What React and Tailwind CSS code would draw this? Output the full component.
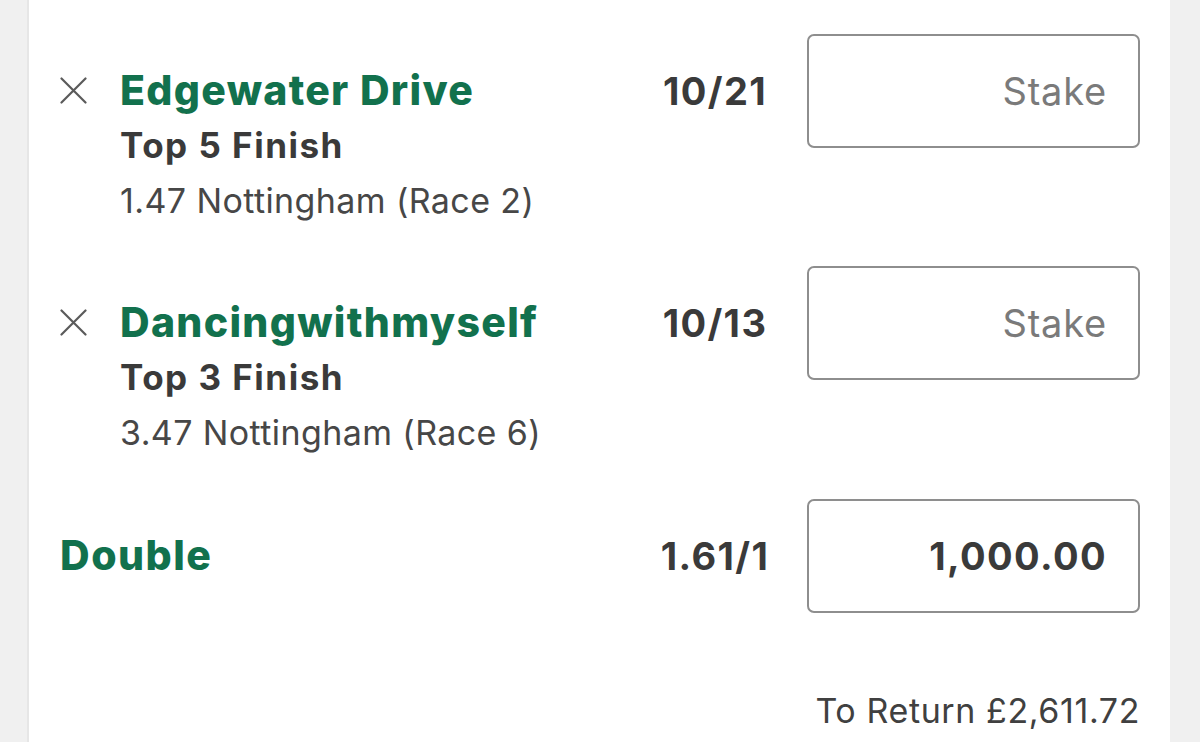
import React from 'react';

const selections = [
  { name: 'Edgewater Drive', market: 'Top 5 Finish', event: '1.47 Nottingham (Race 2)', odds: '10/21' },
  { name: 'Dancingwithmyself', market: 'Top 3 Finish', event: '3.47 Nottingham (Race 6)', odds: '10/13' },
];

function CloseIcon() {
  return (
    <svg width="27" height="27" viewBox="0 0 27 27" fill="none">
      <path d="M1.5 1.5L25.5 25.5M25.5 1.5L1.5 25.5" stroke="#5a5a5a" strokeWidth="2.2" strokeLinecap="round" />
    </svg>
  );
}

function StakeBox({ value }) {
  return (
    <div className="w-[333px] h-[114px] border-2 border-[#8e8e8e] rounded-[7px] flex items-center justify-end pr-[31px]">
      {value ? (
        <span className="text-[38px] font-bold tracking-[1.4px] text-[#3a3a3a]">{value}</span>
      ) : (
        <span className="text-[38px] tracking-[0.8px] text-[#7a7a7a]">Stake</span>
      )}
    </div>
  );
}

function Selection({ sel }) {
  return (
    <div className="flex items-start h-[232px]">
      <div className="flex-1 flex pt-[29px]">
        <div className="w-[60px] h-[55px] flex items-center">
          <CloseIcon />
        </div>
        <div className="flex flex-col">
          <div className="text-[41px] leading-[55px] font-extrabold tracking-[1.3px] text-[#12714d]">{sel.name}</div>
          <div className="text-[35px] leading-[55px] font-bold tracking-[1.5px] text-[#3a3a3a]">{sel.market}</div>
          <div className="text-[34px] leading-[55px] tracking-[0.4px] text-[#474747]">{sel.event}</div>
        </div>
      </div>
      <div className="w-[150px] h-[114px] flex items-center justify-center text-[38px] font-bold tracking-[1.4px] text-[#3a3a3a]">
        {sel.odds}
      </div>
      <div className="ml-[17px]">
        <StakeBox />
      </div>
    </div>
  );
}

export default function App() {
  return (
    <div className="h-[742px] w-full bg-[#f0f0f0] flex overflow-hidden" style={{ fontFamily: 'Inter, "Noto Sans", sans-serif' }}>
      <div className="ml-[27px] w-[1143px] bg-white border-l-2 border-[#e6e6e6] pl-[31px] pr-[30px] pt-[34px]">
        {selections.map((sel) => (
          <Selection key={sel.name} sel={sel} />
        ))}
        <div className="flex items-center h-[114px] mt-[1px]">
          <div className="flex-1 text-[41px] font-extrabold tracking-[1.5px] text-[#12714d]">Double</div>
          <div className="w-[150px] text-center text-[38px] font-bold tracking-[1.4px] text-[#3a3a3a]">1.61/1</div>
          <div className="ml-[17px]">
            <StakeBox value="1,000.00" />
          </div>
        </div>
        <div className="mt-[78px] text-right text-[34px] leading-[40px] tracking-[0.6px] text-[#404040]">
          To Return £2,611.72
        </div>
      </div>
    </div>
  );
}
